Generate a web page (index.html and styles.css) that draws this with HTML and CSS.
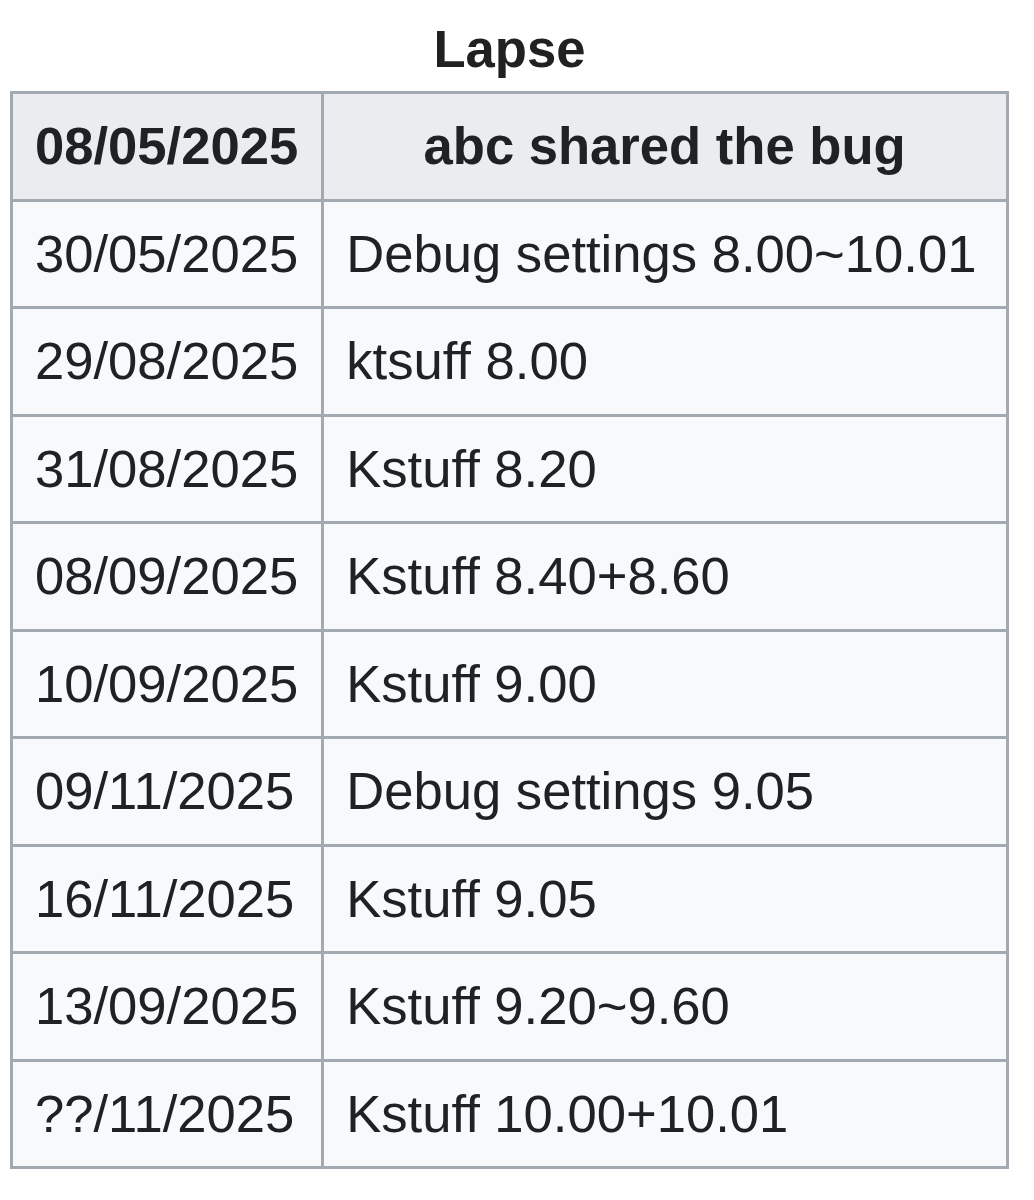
FILE: index.html
```html
<!DOCTYPE html>
<html>
<head>
<meta charset="utf-8">
<link rel="stylesheet" href="styles.css">
</head>
<body>
<table class="wikitable">
  <caption class="cap">Lapse</caption>
  <thead>
    <tr><th class="c1">08/05/2025</th><th class="c2">abc shared the bug</th></tr>
  </thead>
  <tbody>
    <tr><td>30/05/2025</td><td>Debug settings 8.00~10.01</td></tr>
    <tr><td>29/08/2025</td><td>ktsuff 8.00</td></tr>
    <tr><td>31/08/2025</td><td>Kstuff 8.20</td></tr>
    <tr><td>08/09/2025</td><td>Kstuff 8.40+8.60</td></tr>
    <tr><td>10/09/2025</td><td>Kstuff 9.00</td></tr>
    <tr><td>09/11/2025</td><td>Debug settings 9.05</td></tr>
    <tr><td>16/11/2025</td><td>Kstuff 9.05</td></tr>
    <tr><td>13/09/2025</td><td>Kstuff 9.20~9.60</td></tr>
    <tr><td>??/11/2025</td><td>Kstuff 10.00+10.01</td></tr>
  </tbody>
</table>
</body>
</html>
```
FILE: styles.css
```css
html, body {
  margin: 0;
  padding: 0;
  background: #ffffff;
}
body {
  font-family: "Liberation Sans", Arial, Helvetica, sans-serif;
  font-size: 52.6px;
  line-height: 84px;
  color: #202122;
}
.wikitable {
  margin: 7px 0 0 10px;
  width: 999px;
  border-collapse: collapse;
  border: 3px solid #a2a9b1;
  background: #f8f9fa;
}
.cap {
  font-weight: bold;
  text-align: center;
  padding: 0;
}
.wikitable th,
.wikitable td {
  border: 3px solid #a2a9b1;
  padding: 10.25px 23px 10.25px 22px;
  text-align: left;
  vertical-align: middle;
}
.wikitable th {
  background: #eaecf0;
  font-weight: bold;
  text-align: center;
}
.c1 {
  width: 263px;
}
```
